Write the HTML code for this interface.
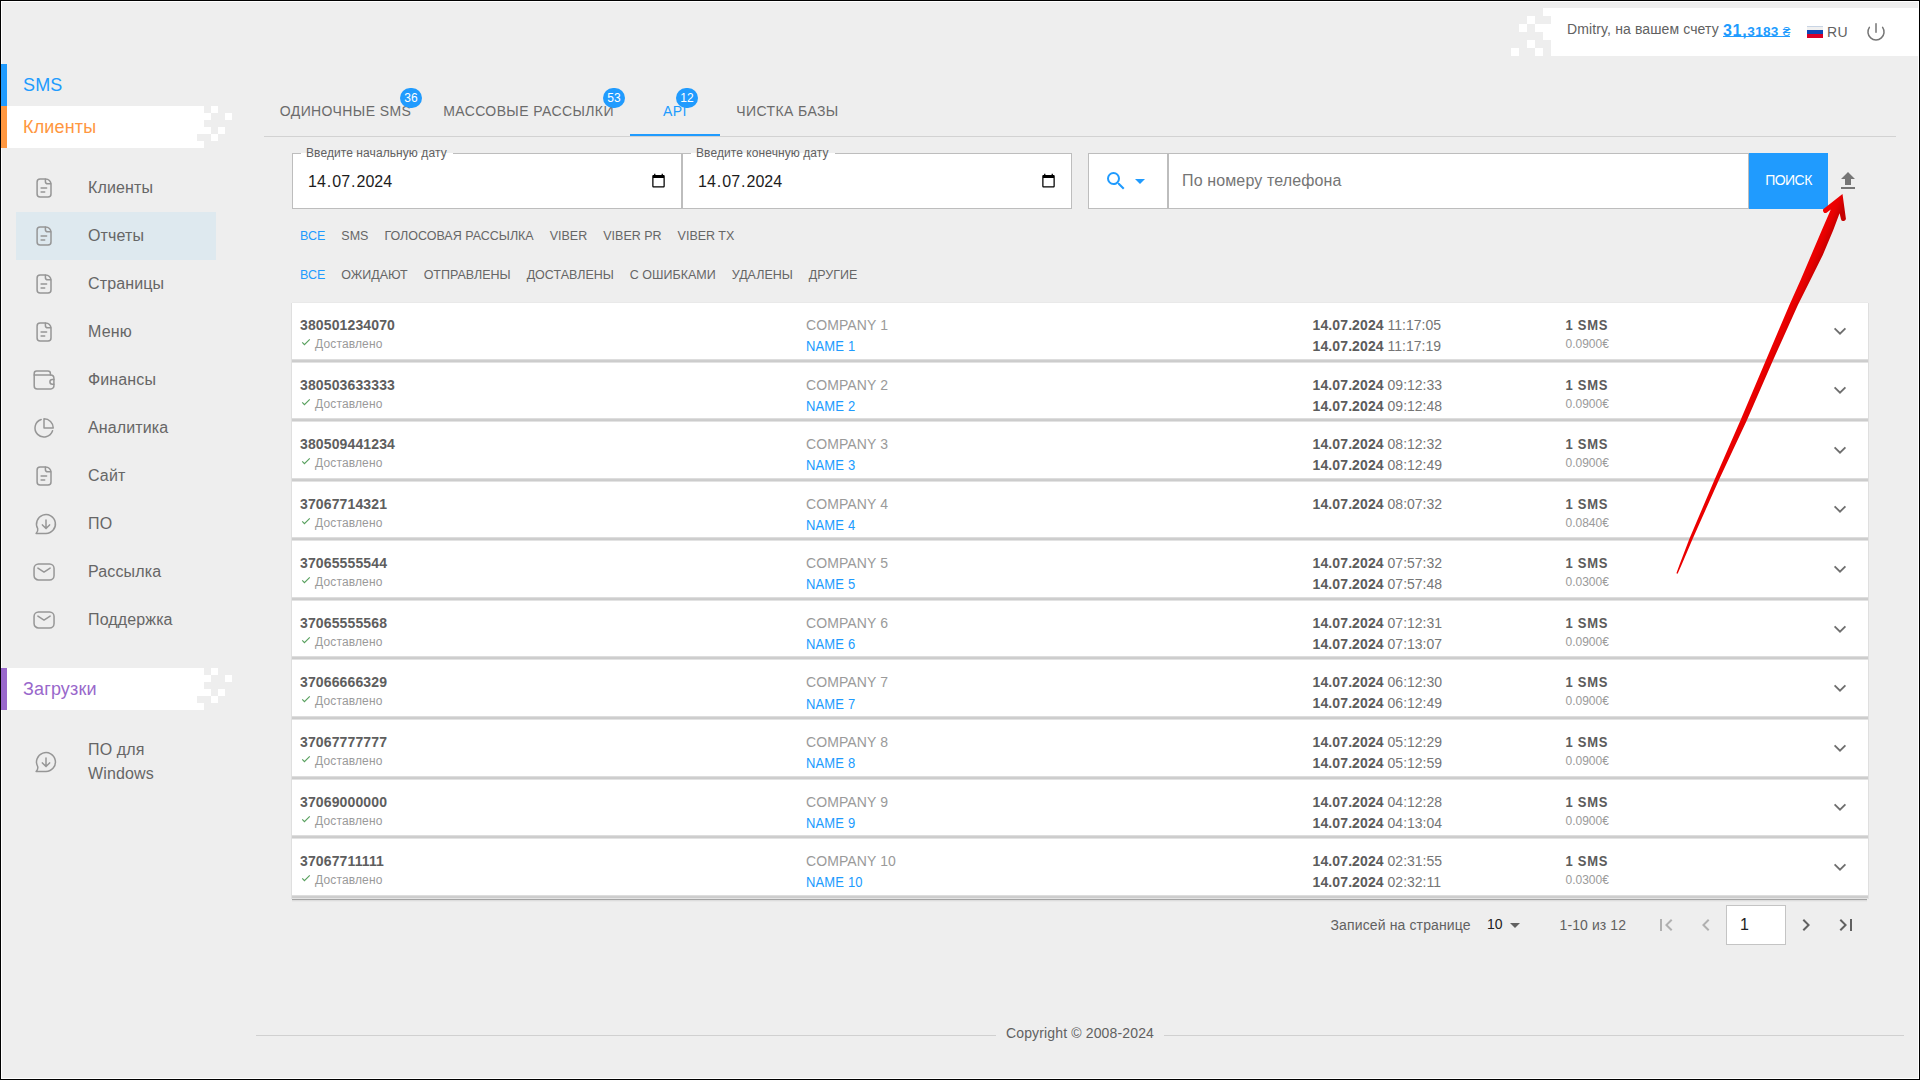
<!DOCTYPE html>
<html lang="ru">
<head>
<meta charset="utf-8">
<title>SMS — Отчеты</title>
<style>
*{box-sizing:border-box;margin:0;padding:0}
html,body{width:1920px;height:1080px;overflow:hidden;background:#eeeeee}
body{font-family:"Liberation Sans",sans-serif;font-size:14px;color:#616161}
#app{position:relative;width:1920px;height:1080px;overflow:hidden;background:#eeeeee}
.frame{position:absolute;left:0;top:0;width:1920px;height:1080px;border:1px solid #000;pointer-events:none;z-index:9}
.frame2{position:absolute;left:1px;top:1px;width:1918px;height:1078px;border:1px solid #fff;pointer-events:none}
svg{display:block;position:absolute}
/* sidebar */
.side{position:absolute;left:0;top:0;width:256px;height:1080px}
.sec{position:absolute;z-index:2;left:1px;width:203px;height:42px;border-left:6px solid;font-size:18px;line-height:42px}
.sec span{position:absolute;left:16px;top:0;white-space:nowrap;letter-spacing:.15px}
.sec-sms{top:64px;border-color:#209bfe;color:#209bfe}
.sec-cl{top:106px;border-color:#ff9740;color:#ff9740;background:#fff}
.sec-dl{top:668px;border-color:#9968cb;color:#9968cb;background:#fff}
.px{position:absolute;width:7px;height:7px;background:#fff}
.p1{left:204px;top:0}.p2{left:197px;top:7px}.p3{left:218px;top:7px}.p4{left:197px;top:21px}.p5{left:211px;top:21px}.p6{left:204px;top:28px}.p7{display:none}
.notch{position:absolute;left:190px;top:28px;width:7px;height:7px;background:#eeeeee}
.menu{position:absolute;left:16px;top:164px;width:200px;list-style:none}
.menu li{position:relative;height:48px;font-size:16px;line-height:48px;color:#666;letter-spacing:.13px}
.menu li.act{background:#dee9ef}
.menu li span{position:absolute;left:72px;top:0;white-space:nowrap}
.menu li .ic{left:16px;top:12px;width:24px;height:24px;fill:none;stroke:#969696;stroke-width:1.5;stroke-linecap:round;stroke-linejoin:round}
.menu2{top:738px}
.menu2 li.two span{line-height:24px}
/* user */
.user{position:absolute;left:1551px;top:8px;width:367px;height:48px;background:#fff}
.ux{position:absolute;width:8px;height:8px;background:#fff}
.u1{left:-8px;top:0}.u2{left:-24px;top:8px}.u3{left:-32px;top:16px}.u4{left:-16px;top:16px;width:16px}.u5{left:-8px;top:24px}.u6{left:-24px;top:32px}.u7{left:-40px;top:40px}.u8{left:-16px;top:40px}.u9{display:none}
.hello{position:absolute;left:16px;top:13px;font-size:14px;line-height:16px;white-space:nowrap;letter-spacing:.12px}
.bal{position:absolute;left:172px;top:14px;line-height:18px;color:#209bfe;white-space:nowrap;text-decoration:none}
.bal:after{content:"";position:absolute;left:0;right:0;top:14px;height:1px;background:#209bfe}
.bal .big{font-size:16px;letter-spacing:.7px}.bal .sm{font-size:13.6px;letter-spacing:.25px}
.flag{position:absolute;left:256px;top:18px;width:16px;height:11.5px}
.flag i{display:block;height:3.75px}
.flag i:nth-child(1){height:4px;background:#f0f0f0;border-top:1px solid #c8d4e4}
.flag i:nth-child(2){background:#0d47b5}
.flag i:nth-child(3){background:#d80027}
.lang{position:absolute;left:276px;top:16px;letter-spacing:.3px;font-size:14px;line-height:16px}
.pwr{left:313px;top:12px;width:24px;height:24px;fill:none;stroke:#757575;stroke-width:1.5;stroke-linecap:round}
/* tabs */
.tabs{position:absolute;left:264px;top:86px;width:1632px;height:51px;border-bottom:1px solid #d2d2d2}
.tab{position:absolute;top:0;height:50px;margin-left:-264px;text-align:center;font-size:14px;line-height:50px;letter-spacing:.4px;color:#6b6b6b;white-space:nowrap}
.tab.on{color:#209bfe}
.bdg{position:absolute;top:2px;width:22px;height:20px;border-radius:10px;background:#209bfe;color:#fff;font-style:normal;font-size:12px;line-height:20px;letter-spacing:0;text-align:center}
.slider{position:absolute;left:366px;top:48px;width:90px;height:2px;background:#209bfe}
/* fields */
.fld{position:absolute;top:153px;height:56px;background:#fff;border:1px solid #bdbdbd}
.fld .lg{position:absolute;left:8px;top:-8px;height:14px;background:linear-gradient(#eeeeee 50%,#fff 50%)}
.fld label{position:absolute;left:5px;top:0;font-size:12px;line-height:14px;color:#616161;white-space:nowrap;letter-spacing:.08px}
.dt{position:absolute;left:14px;top:18px;font-size:16px;line-height:20px;color:#1c1c1c;white-space:nowrap}
.dt span{padding:0 1px}
.cal{left:357.6px;top:18.9px;width:15px;height:15px}
.sel{position:absolute;left:1088px;top:153px;width:80px;height:56px;background:#fff;border:1px solid #bdbdbd}
.mag{left:15px;top:15px;width:24px;height:24px;fill:#209bfe}
.tri{left:39px;top:15px;width:24px;height:24px;fill:#209bfe}
.srch{position:absolute;left:1168px;top:153px;width:581px;height:56px;background:#fff;border:1px solid #bdbdbd}
.srch span{position:absolute;left:13px;top:17px;font-size:16px;line-height:20px;color:#757575;white-space:nowrap;letter-spacing:.13px}
.btn{position:absolute;left:1749px;top:153px;width:79px;height:56px;background:#209bfe;color:#fff;text-align:center;font-size:14px;line-height:54px;letter-spacing:-.55px}
.upl{left:1836px;top:169px;width:24px;height:24px;fill:#757575}
/* chips */
.chips{position:absolute;left:292px;height:18px;white-space:nowrap;font-size:12.5px;line-height:18px;color:#666;letter-spacing:0}
.chips span{display:inline-block;padding:0 8px}
.chips .on{color:#209bfe}
/* list */
.list{position:absolute;left:291px;top:302px;width:1578px;height:597px;background:linear-gradient(#e9e9e9,#e9e9e9) 1px 0/1576px 1px no-repeat,linear-gradient(#dfdfdf,#dfdfdf) 0 1px/1px 596px no-repeat,linear-gradient(#dfdfdf,#dfdfdf) 100% 1px/1px 596px no-repeat}
.row{position:absolute;left:1px;width:1576px;height:60px;background:linear-gradient(#dcdcdc,#dcdcdc) 0 100%/100% 4px no-repeat;}
.row:before{content:"";position:absolute;left:0;bottom:0;width:100%;height:4px;background:linear-gradient(#dddddd 0 1px,#cecece 1px 2px,#cccccc 2px 3px,#e3e3e3 3px 4px)}
.row:after{content:"";position:absolute;left:0;top:0;width:100%;bottom:4px;background:#fff}
.row div{position:absolute;z-index:1;white-space:nowrap;line-height:16px}
.ph{left:8px;top:14px;font-size:14px;font-weight:bold;color:#5e5e5e;letter-spacing:.13px}
.st{left:8px;top:33px;font-size:12px;color:#9a9a9a;letter-spacing:.15px}
.st span{position:absolute;left:15px;top:0}
.chk{left:0;top:0;width:12px;height:12px;fill:none;stroke:#58a05e;stroke-width:1.15}
.co{left:514px;top:14px;color:#9a9a9a;letter-spacing:.1px}
.nm{left:514px;top:36px;font-size:13px;letter-spacing:.15px;color:#209bfe;transform:scaleY(1.075);transform-origin:0 12px}
.d1{left:1020.6px;top:14px;color:#757575}
.d2{left:1020.6px;top:35px;color:#757575}
.row b{color:#5c5c5c;letter-spacing:.1px}
.cnt{left:1273.5px;top:15px;font-size:13px;font-weight:bold;color:#5c5c5c;letter-spacing:.75px;transform:scaleY(1.075);transform-origin:0 12px}
.pr{left:1273.5px;top:33px;font-size:12px;color:#9a9a9a}
.chev{z-index:1;left:1536px;top:16px;width:24px;height:24px;fill:none;stroke:#6e6e6e;stroke-width:1.8}
/* pagination */
.pag{position:absolute;left:0;top:905px;width:1920px;height:40px;font-size:14px;color:#616161}
.pag span{position:absolute;top:12px;line-height:16px;white-space:nowrap}
.pp{left:1330.5px;letter-spacing:.13px}.pag .pn{left:1487px;top:11px;color:#222}.pr2{left:1559.5px;letter-spacing:.1px}
.ptri{left:1503px;top:8px;width:24px;height:24px;fill:#616161}
.pi{top:8px;width:24px;height:24px;fill:#616161}
.pi.dis{fill:#b0b0b0}
.pbox{position:absolute;left:1726px;top:0;width:60px;height:40px;background:#fff;border:1px solid #c4c4c4}
.pbox span{left:13px;top:9px;font-size:16px;line-height:20px;color:#222}
/* footer */
.foot{position:absolute;left:256px;top:1024px;width:1648px;height:18px;text-align:center}
.foot:before{content:"";position:absolute;left:0;top:11px;width:100%;height:1px;background:#d0d0d0}
.foot span{position:relative;display:inline-block;padding:0 10px;letter-spacing:.15px;background:#eeeeee;font-size:14px;line-height:18px;color:#616161}
.arrow{left:0;top:0;pointer-events:none}

.bal i{font-style:normal;font-weight:normal}
.menu li .ic28{width:28px}
.lend{position:absolute;left:1px;top:597px;width:1575px;height:3px;background:linear-gradient(#a4a4a4 0 1px,#dddddd 1px 2px,#e8e8e8 2px 3px)}

</style>
</head>
<body>
<div id="app">
<div class="frame2"></div>
<nav class="side">
<div class="sec sec-sms"><span>SMS</span></div>
<div class="sec sec-cl"><i class="px p1"></i><i class="px p2"></i><i class="px p3"></i><i class="px p4"></i><i class="px p5"></i><i class="px p6"></i><i class="px p7"></i><i class="notch"></i><span>Клиенты</span></div>
<ul class="menu">
<li><svg class="ic" viewBox="0 0 24 24"><path d="M13.600 3H8.100a3 3 0 0 0-3 3v11.900a3 3 0 0 0 3 3h7.900a3 3 0 0 0 3-3V8.400c0-3-2.400-5.400-5.400-5.400z"/><path d="M13.400 3.200v2.200a2.400 2.400 0 0 0 2.400 2.400h3"/><path d="M9.100 12h5.500M9.100 15.900h3.600"/></svg><span>Клиенты</span></li>
<li class="act"><svg class="ic" viewBox="0 0 24 24"><path d="M13.600 3H8.100a3 3 0 0 0-3 3v11.900a3 3 0 0 0 3 3h7.900a3 3 0 0 0 3-3V8.400c0-3-2.400-5.400-5.400-5.400z"/><path d="M13.400 3.200v2.200a2.400 2.400 0 0 0 2.400 2.400h3"/><path d="M9.100 12h5.500M9.100 15.900h3.600"/></svg><span>Отчеты</span></li>
<li><svg class="ic" viewBox="0 0 24 24"><path d="M13.600 3H8.100a3 3 0 0 0-3 3v11.900a3 3 0 0 0 3 3h7.900a3 3 0 0 0 3-3V8.400c0-3-2.400-5.400-5.400-5.400z"/><path d="M13.400 3.200v2.200a2.400 2.400 0 0 0 2.400 2.400h3"/><path d="M9.100 12h5.500M9.100 15.900h3.600"/></svg><span>Страницы</span></li>
<li><svg class="ic" viewBox="0 0 24 24"><path d="M13.600 3H8.100a3 3 0 0 0-3 3v11.900a3 3 0 0 0 3 3h7.900a3 3 0 0 0 3-3V8.400c0-3-2.400-5.400-5.400-5.400z"/><path d="M13.400 3.200v2.200a2.400 2.400 0 0 0 2.400 2.400h3"/><path d="M9.100 12h5.500M9.100 15.900h3.600"/></svg><span>Меню</span></li>
<li><svg class="ic" viewBox="0 0 24 24"><path d="M2.200 6.900v11a3 3 0 0 0 3 3h13.700a3 3 0 0 0 3-3v-7.750a3.250 3.250 0 0 0-3.250-3.250z"/><path d="M2.200 6.900V5.400a2.400 2.400 0 0 1 2.400-2.400H16a2.400 2.400 0 0 1 2.400 2.400v1.500"/><path d="M21.900 11.400h-1.550a2.450 2.450 0 0 0 0 4.900h1.550"/></svg><span>Финансы</span></li>
<li><svg class="ic" viewBox="0 0 24 24"><path d="M9.200 3.450A9 9 0 1 0 20.550 14.800"/><path d="M12 2.750V12h9.250A9.250 9.250 0 0 0 12 2.750z"/></svg><span>Аналитика</span></li>
<li><svg class="ic" viewBox="0 0 24 24"><path d="M13.600 3H8.100a3 3 0 0 0-3 3v11.900a3 3 0 0 0 3 3h7.900a3 3 0 0 0 3-3V8.400c0-3-2.400-5.400-5.400-5.400z"/><path d="M13.400 3.200v2.200a2.400 2.400 0 0 0 2.400 2.400h3"/><path d="M9.100 12h5.500M9.100 15.900h3.600"/></svg><span>Сайт</span></li>
<li><svg class="ic ic28" viewBox="0 0 28 24"><path d="M14 21.450H4.100Q6.300 19.200 5.700 16.600A9.450 9.450 0 1 1 14 21.450z"/><path d="M14 7.900v8.600M10.400 12.900l3.600 3.700 3.600-3.700"/></svg><span>ПО</span></li>
<li><svg class="ic" viewBox="0 0 24 24"><rect x="2.050" y="3.950" width="20" height="16" rx="4.500"/><path d="M5.900 8.100l6.100 4 6.100-4"/></svg><span>Рассылка</span></li>
<li><svg class="ic" viewBox="0 0 24 24"><rect x="2.050" y="3.950" width="20" height="16" rx="4.500"/><path d="M5.900 8.100l6.100 4 6.100-4"/></svg><span>Поддержка</span></li>
</ul>
<div class="sec sec-dl"><i class="px p1"></i><i class="px p2"></i><i class="px p3"></i><i class="px p4"></i><i class="px p5"></i><i class="px p6"></i><i class="px p7"></i><i class="notch"></i><span>Загрузки</span></div>
<ul class="menu menu2">
<li class="two"><svg class="ic ic28" viewBox="0 0 28 24"><path d="M14 21.450H4.100Q6.300 19.200 5.700 16.600A9.450 9.450 0 1 1 14 21.450z"/><path d="M14 7.900v8.600M10.400 12.900l3.600 3.700 3.600-3.700"/></svg><span>ПО для<br>Windows</span></li>
</ul>
</nav>
<div class="user">
<i class="ux u1"></i><i class="ux u2"></i><i class="ux u3"></i><i class="ux u4"></i><i class="ux u5"></i><i class="ux u6"></i><i class="ux u7"></i><i class="ux u8"></i><i class="ux u9"></i>
<span class="hello">Dmitry, на вашем счету</span>
<a class="bal"><b class="big">31,</b><b class="sm">3183 <i>₴</i></b></a>
<span class="flag"><i></i><i></i><i></i></span>
<span class="lang">RU</span>
<svg class="pwr" viewBox="0 0 24 24"><path d="M12 3.850v8.500"/><path d="M5.370 7.330A8.050 8.050 0 1 0 18.630 7.330"/></svg>
</div>
<div class="tabs">
<div class="tab" style="left:264px;width:163px"><span>ОДИНОЧНЫЕ SMS</span><em class="bdg" style="left:136px">36</em></div>
<div class="tab" style="left:427px;width:203px"><span>МАССОВЫЕ РАССЫЛКИ</span><em class="bdg" style="left:176px">53</em></div>
<div class="tab on" style="left:630px;width:90px"><span>API</span><em class="bdg" style="left:46px">12</em></div>
<div class="tab" style="left:720px;width:135px"><span>ЧИСТКА БАЗЫ</span></div>
<div class="slider"></div>
</div>
<div class="fld" style="left:292px;width:390px">
<div class="lg" style="width:152px"><label>Введите начальную дату</label></div>
<div class="dt"><span>14</span>.<span>07</span>.<span>2024</span></div>
<svg class="cal" viewBox="0 0 24 24"><path d="M20 3h-1V1h-2v2H7V1H5v2H4c-1.100 0-2 .900-2 2v16c0 1.100.900 2 2 2h16c1.100 0 2-.900 2-2V5c0-1.100-.900-2-2-2zm0 18H4V8h16v13z"/></svg>
</div>
<div class="fld" style="left:682px;width:390px">
<div class="lg" style="width:144px"><label>Введите конечную дату</label></div>
<div class="dt"><span>14</span>.<span>07</span>.<span>2024</span></div>
<svg class="cal" viewBox="0 0 24 24"><path d="M20 3h-1V1h-2v2H7V1H5v2H4c-1.100 0-2 .900-2 2v16c0 1.100.900 2 2 2h16c1.100 0 2-.900 2-2V5c0-1.100-.900-2-2-2zm0 18H4V8h16v13z"/></svg>
</div>
<div class="sel">
<svg class="mag" viewBox="0 0 24 24"><path d="M15.500 14h-.790l-.280-.270A6.471 6.471 0 0 0 16 9.500 6.500 6.500 0 1 0 9.500 16c1.610 0 3.090-.590 4.230-1.570l.270.280v.790l5 4.990L20.490 19l-4.990-5zm-6 0C7.010 14 5 11.990 5 9.500S7.010 5 9.500 5 14 7.010 14 9.500 11.990 14 9.500 14z"/></svg>
<svg class="tri" viewBox="0 0 24 24"><path d="M7 10l5 5 5-5z"/></svg>
</div>
<div class="srch"><span>По номеру телефона</span></div>
<div class="btn"><span>ПОИСК</span></div>
<svg class="upl" viewBox="0 0 24 24"><path d="M9 16h6v-6h4l-7-7-7 7h4zm-4 2h14v2H5z"/></svg>
<div class="chips" style="top:227px">
<span class="on">ВСЕ</span><span>SMS</span><span>ГОЛОСОВАЯ РАССЫЛКА</span><span>VIBER</span><span>VIBER PR</span><span>VIBER TX</span>
</div>
<div class="chips" style="top:266px">
<span class="on">ВСЕ</span><span>ОЖИДАЮТ</span><span>ОТПРАВЛЕНЫ</span><span>ДОСТАВЛЕНЫ</span><span>С ОШИБКАМИ</span><span>УДАЛЕНЫ</span><span>ДРУГИЕ</span>
</div>
<div class="list">
<div class="row" style="top:1px;height:60px">
<div class="ph">380501234070</div><div class="st"><svg class="chk" viewBox="0 0 12 12"><path d="M2.250 6.400L4.440 8.700 9.750 3.300"/></svg><span>Доставлено</span></div>
<div class="co">COMPANY 1</div><div class="nm">NAME 1</div>
<div class="d1"><b>14.07.2024</b> 11:17:05</div><div class="d2"><b>14.07.2024</b> 11:17:19</div>
<div class="cnt">1 SMS</div><div class="pr">0.0900€</div>
<svg class="chev" style="top:16px" viewBox="0 0 24 24"><path d="M6.600 9.300l5.400 5.400 5.400-5.400"/></svg>
</div>
<div class="row" style="top:61px;height:59px">
<div class="ph">380503633333</div><div class="st"><svg class="chk" viewBox="0 0 12 12"><path d="M2.250 6.400L4.440 8.700 9.750 3.300"/></svg><span>Доставлено</span></div>
<div class="co">COMPANY 2</div><div class="nm">NAME 2</div>
<div class="d1"><b>14.07.2024</b> 09:12:33</div><div class="d2"><b>14.07.2024</b> 09:12:48</div>
<div class="cnt">1 SMS</div><div class="pr">0.0900€</div>
<svg class="chev" style="top:15px" viewBox="0 0 24 24"><path d="M6.600 9.300l5.400 5.400 5.400-5.400"/></svg>
</div>
<div class="row" style="top:120px;height:60px">
<div class="ph">380509441234</div><div class="st"><svg class="chk" viewBox="0 0 12 12"><path d="M2.250 6.400L4.440 8.700 9.750 3.300"/></svg><span>Доставлено</span></div>
<div class="co">COMPANY 3</div><div class="nm">NAME 3</div>
<div class="d1"><b>14.07.2024</b> 08:12:32</div><div class="d2"><b>14.07.2024</b> 08:12:49</div>
<div class="cnt">1 SMS</div><div class="pr">0.0900€</div>
<svg class="chev" style="top:16px" viewBox="0 0 24 24"><path d="M6.600 9.300l5.400 5.400 5.400-5.400"/></svg>
</div>
<div class="row" style="top:180px;height:59px">
<div class="ph">37067714321</div><div class="st"><svg class="chk" viewBox="0 0 12 12"><path d="M2.250 6.400L4.440 8.700 9.750 3.300"/></svg><span>Доставлено</span></div>
<div class="co">COMPANY 4</div><div class="nm">NAME 4</div>
<div class="d1"><b>14.07.2024</b> 08:07:32</div>
<div class="cnt">1 SMS</div><div class="pr">0.0840€</div>
<svg class="chev" style="top:15px" viewBox="0 0 24 24"><path d="M6.600 9.300l5.400 5.400 5.400-5.400"/></svg>
</div>
<div class="row" style="top:239px;height:60px">
<div class="ph">37065555544</div><div class="st"><svg class="chk" viewBox="0 0 12 12"><path d="M2.250 6.400L4.440 8.700 9.750 3.300"/></svg><span>Доставлено</span></div>
<div class="co">COMPANY 5</div><div class="nm">NAME 5</div>
<div class="d1"><b>14.07.2024</b> 07:57:32</div><div class="d2"><b>14.07.2024</b> 07:57:48</div>
<div class="cnt">1 SMS</div><div class="pr">0.0300€</div>
<svg class="chev" style="top:16px" viewBox="0 0 24 24"><path d="M6.600 9.300l5.400 5.400 5.400-5.400"/></svg>
</div>
<div class="row" style="top:299px;height:59px">
<div class="ph">37065555568</div><div class="st"><svg class="chk" viewBox="0 0 12 12"><path d="M2.250 6.400L4.440 8.700 9.750 3.300"/></svg><span>Доставлено</span></div>
<div class="co">COMPANY 6</div><div class="nm">NAME 6</div>
<div class="d1"><b>14.07.2024</b> 07:12:31</div><div class="d2"><b>14.07.2024</b> 07:13:07</div>
<div class="cnt">1 SMS</div><div class="pr">0.0900€</div>
<svg class="chev" style="top:16px" viewBox="0 0 24 24"><path d="M6.600 9.300l5.400 5.400 5.400-5.400"/></svg>
</div>
<div class="row" style="top:358px;height:60px">
<div class="ph">37066666329</div><div class="st"><svg class="chk" viewBox="0 0 12 12"><path d="M2.250 6.400L4.440 8.700 9.750 3.300"/></svg><span>Доставлено</span></div>
<div class="co">COMPANY 7</div><div class="nm" style="top:37px">NAME 7</div>
<div class="d1"><b>14.07.2024</b> 06:12:30</div><div class="d2"><b>14.07.2024</b> 06:12:49</div>
<div class="cnt">1 SMS</div><div class="pr">0.0900€</div>
<svg class="chev" style="top:16px" viewBox="0 0 24 24"><path d="M6.600 9.300l5.400 5.400 5.400-5.400"/></svg>
</div>
<div class="row" style="top:418px;height:60px">
<div class="ph">37067777777</div><div class="st"><svg class="chk" viewBox="0 0 12 12"><path d="M2.250 6.400L4.440 8.700 9.750 3.300"/></svg><span>Доставлено</span></div>
<div class="co">COMPANY 8</div><div class="nm">NAME 8</div>
<div class="d1"><b>14.07.2024</b> 05:12:29</div><div class="d2"><b>14.07.2024</b> 05:12:59</div>
<div class="cnt">1 SMS</div><div class="pr">0.0900€</div>
<svg class="chev" style="top:16px" viewBox="0 0 24 24"><path d="M6.600 9.300l5.400 5.400 5.400-5.400"/></svg>
</div>
<div class="row" style="top:478px;height:59px">
<div class="ph">37069000000</div><div class="st"><svg class="chk" viewBox="0 0 12 12"><path d="M2.250 6.400L4.440 8.700 9.750 3.300"/></svg><span>Доставлено</span></div>
<div class="co">COMPANY 9</div><div class="nm">NAME 9</div>
<div class="d1"><b>14.07.2024</b> 04:12:28</div><div class="d2"><b>14.07.2024</b> 04:13:04</div>
<div class="cnt">1 SMS</div><div class="pr">0.0900€</div>
<svg class="chev" style="top:15px" viewBox="0 0 24 24"><path d="M6.600 9.300l5.400 5.400 5.400-5.400"/></svg>
</div>
<div class="row" style="top:537px;height:60px">
<div class="ph">37067711111</div><div class="st"><svg class="chk" viewBox="0 0 12 12"><path d="M2.250 6.400L4.440 8.700 9.750 3.300"/></svg><span>Доставлено</span></div>
<div class="co">COMPANY 10</div><div class="nm">NAME 10</div>
<div class="d1"><b>14.07.2024</b> 02:31:55</div><div class="d2"><b>14.07.2024</b> 02:32:11</div>
<div class="cnt">1 SMS</div><div class="pr">0.0300€</div>
<svg class="chev" style="top:16px" viewBox="0 0 24 24"><path d="M6.600 9.300l5.400 5.400 5.400-5.400"/></svg>
</div>
<div class="lend"></div>
</div>
<div class="pag">
<span class="pp">Записей на странице</span>
<span class="pn">10</span>
<svg class="ptri" viewBox="0 0 24 24"><path d="M7 10l5 5 5-5z"/></svg>
<span class="pr2">1-10 из 12</span>
<svg class="pi dis" style="left:1654px" viewBox="0 0 24 24"><path d="M18.410 16.590L13.820 12l4.590-4.590L17 6l-6 6 6 6zM6 6h2v12H6z"/></svg>
<svg class="pi dis" style="left:1694px" viewBox="0 0 24 24"><path d="M15.410 7.410L14 6l-6 6 6 6 1.410-1.410L10.830 12z"/></svg>
<div class="pbox"><span>1</span></div>
<svg class="pi" style="left:1794px" viewBox="0 0 24 24"><path d="M10 6L8.590 7.410 13.170 12l-4.580 4.590L10 18l6-6z"/></svg>
<svg class="pi" style="left:1834px" viewBox="0 0 24 24"><path d="M5.590 7.410L10.180 12l-4.590 4.590L7 18l6-6-6-6zM16 6h2v12h-2z"/></svg>
</div>
<div class="foot"><span>Copyright © 2008-2024</span></div>
<svg class="arrow" width="1920" height="1080" viewBox="0 0 1920 1080">
<defs><linearGradient id="ag" gradientUnits="userSpaceOnUse" x1="1823.500" y1="219.800" x2="1836.500" y2="225.400"><stop offset="0" stop-color="#f20000"/><stop offset="0.450" stop-color="#e80000"/><stop offset="1" stop-color="#c40000"/></linearGradient></defs>
<path d="M1842.500 194 L1824.100 208.500 A2.300 2.300 0 0 0 1826.900 212.500 L1830.800 209.600 L1821.900 230 L1811.250 255 L1800.600 280 L1789.400 305 L1765.600 361 L1740.600 420 L1714.400 480 L1689.400 538.750 L1679.400 565 L1676.400 573.200 L1677.600 573.700 L1681.500 565 L1692.700 538.750 L1718.900 480 L1747 420 L1772.700 361 L1797.900 305 L1810.400 280 L1822.800 255 L1833.300 230 L1839.600 213.300 L1841 219.200 A2.400 2.400 0 0 0 1845.800 217.900 Z" fill="url(#ag)"/>
</svg>
<div class="frame"></div>
</div>
</body>
</html>
